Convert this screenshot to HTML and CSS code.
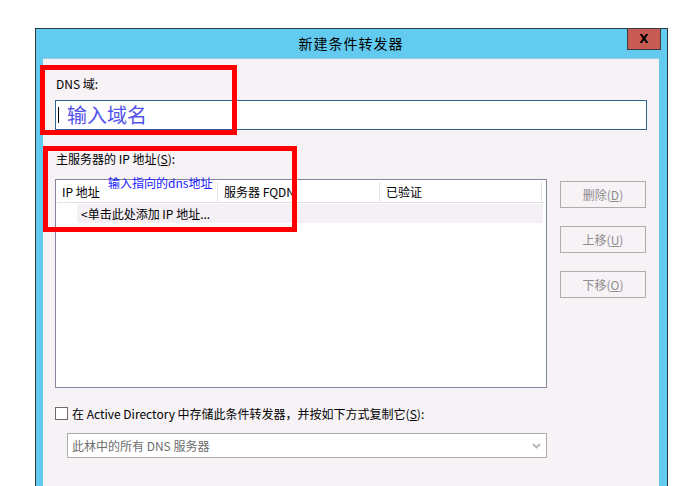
FILE: index.html
```html
<!DOCTYPE html>
<html lang="zh-CN">
<head>
    <meta charset="UTF-8">
    <meta name="viewport" content="width=device-width, initial-scale=1.0">
    <title>新建条件转发器</title>
    <link rel="stylesheet" href="styles.css">
</head>
<body>
    <div class="window">
        <div class="titlebar">
            新建条件转发器
            <button class="close-btn">X</button>
        </div>
        <div class="client">
            <div class="field-label">DNS 域:</div>
            <div class="domain-input">
                <span class="caret"></span>
                <span class="placeholder">输入域名</span>
            </div>

            <div class="field-label servers-label">主服务器的 IP 地址(<u>S</u>):</div>
            <div class="servers">
                <div class="server-list">
                    <div class="list-head">
                        <div class="col">IP 地址</div>
                        <div class="col">服务器 FQDN</div>
                        <div class="col">已验证</div>
                    </div>
                    <div class="list-row">&lt;单击此处添加 IP 地址...</div>
                </div>
                <div class="side-buttons">
                    <button class="btn">删除(<u>D</u>)</button>
                    <button class="btn">上移(<u>U</u>)</button>
                    <button class="btn">下移(<u>O</u>)</button>
                </div>
            </div>

            <label class="store-row">
                <span class="checkbox"></span>
                在 Active Directory 中存储此条件转发器，并按如下方式复制它(<u>S</u>):
            </label>
            <div class="replica-select">
                <span>此林中的所有 DNS 服务器</span>
                <svg class="chevron" width="9" height="6" viewBox="0 0 9 6">
                    <path d="M1 1 L4.5 4.5 L8 1" fill="none" stroke="#b5b5b5" stroke-width="1.8"/>
                </svg>
            </div>
        </div>
    </div>

    <!-- annotations drawn over the dialog -->
    <div class="mark mark-domain"></div>
    <div class="mark mark-servers"></div>
    <div class="note">输入指向的dns地址</div>
</body>
</html>
```

FILE: styles.css
```css
body {
    margin: 0;
    background-color: white;
    font-family: "Noto Sans CJK SC", "Noto Sans", sans-serif;
    font-size: 12px;
    color: #000;
    overflow: hidden;
}

.window {
    position: relative;
    box-sizing: border-box;
    width: 633px;
    margin: 28px 0 0 35px;
    padding: 0 8px 0 7px;
    background-color: #63caf0;
    border: 1px solid #2b3940;
    border-bottom: none;
}

.titlebar {
    height: 29px;
    line-height: 29px;
    text-align: center;
    font-size: 14px;
    letter-spacing: 1px;
}

.close-btn {
    position: absolute;
    top: -1px;
    right: 6px;
    width: 34px;
    height: 22px;
    padding: 0;
    background-color: #c75a52;
    border: 1px solid #3d3d3d;
    font-family: "DejaVu Sans", sans-serif;
    font-size: 12px;
    font-weight: bold;
    line-height: 18px;
    letter-spacing: 0;
    color: #000;
}

.client {
    height: 440px;
    padding: 17px 12px 0 12px;
    background-color: #f6f2f6;
    border-top: 1px solid #9cc6dc;
    box-sizing: border-box;
}

.field-label {
    height: 16px;
    line-height: 16px;
    padding-left: 1px;
}

.domain-input {
    display: flex;
    align-items: center;
    height: 30px;
    margin-top: 8px;
    box-sizing: border-box;
    background-color: white;
    border: 1px solid #2f6593;
}

.caret {
    width: 1px;
    height: 16px;
    margin-left: 2px;
    background-color: #000;
}

.placeholder {
    margin-left: 8px;
    font-size: 20px;
    line-height: 28px;
    color: #5352ea;
}

.servers-label {
    margin-top: 21px;
}

.servers {
    display: flex;
    gap: 13px;
    margin-top: 12px;
}

.server-list {
    width: 492px;
    height: 209px;
    box-sizing: border-box;
    padding: 1px;
    background-color: white;
    border: 1px solid #82879a;
}

.list-head {
    display: flex;
    width: 487px;
    margin-top: 1px;
    border-bottom: 1px solid #e3e3e3;
}

.list-head .col {
    width: 161px;
    height: 20px;
    line-height: 20px;
    padding-left: 5px;
    box-sizing: border-box;
    border-right: 1px solid #e3e3e3;
    margin-right: 1px;
}

.list-row {
    height: 19px;
    line-height: 19px;
    margin: 1px 0 0 20px;
    width: 466px;
    padding-left: 4px;
    box-sizing: border-box;
    background-color: #f4f0f5;
}

.side-buttons {
    display: flex;
    flex-direction: column;
    gap: 18px;
    padding-top: 2px;
}

.btn {
    width: 86px;
    height: 27px;
    padding: 0;
    background-color: #f6f2f6;
    border: 1px solid #adadad;
    font-family: "Noto Sans CJK SC", "Noto Sans", sans-serif;
    font-size: 12px;
    color: #8c8c8c;
}

.store-row {
    display: flex;
    align-items: center;
    height: 16px;
    margin-top: 17px;
}

.checkbox {
    width: 11px;
    height: 11px;
    margin-right: 4px;
    background-color: white;
    border: 1px solid #6d6d6d;
}

.replica-select {
    display: flex;
    align-items: center;
    justify-content: space-between;
    width: 480px;
    height: 25px;
    margin: 12px 0 0 12px;
    padding: 0 5px 0 4px;
    box-sizing: border-box;
    background-color: white;
    border: 1px solid #acacac;
    color: #6d6d6d;
}

.mark {
    position: absolute;
    border: 5px solid #ff0000;
}

.mark-domain {
    left: 40px;
    top: 65px;
    width: 187px;
    height: 60px;
}

.mark-servers {
    left: 43px;
    top: 146px;
    width: 244px;
    height: 76px;
}

.note {
    position: absolute;
    left: 108px;
    top: 175px;
    font-size: 12px;
    line-height: 16px;
    color: #1a1aff;
}
```
